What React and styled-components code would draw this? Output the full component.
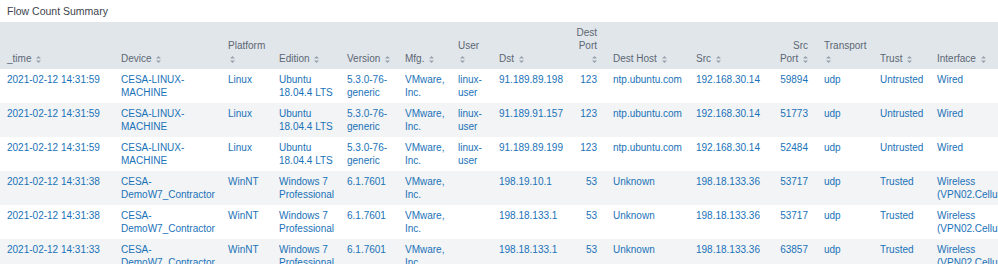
import React from 'react';
import styled, { createGlobalStyle } from 'styled-components';

const GlobalStyle = createGlobalStyle`
  body {
    margin: 0;
    background: #ffffff;
    font-family: "Liberation Sans", Arial, sans-serif;
  }
`;

// column widths measured off the dashboard panel
const COLUMNS = '114px 107px 51px 68px 58px 53px 41px 76px 38px 83px 82px 46px 56px 57px 130px';

const Panel = styled.div`
  width: 100vw;
  overflow: hidden;
`;

const Title = styled.div`
  height: 22px;
  padding-left: 7px;
  font-size: 10.5px;
  line-height: 22px;
  color: #3c444d;
`;

const Table = styled.div`
  width: 1060px;
`;

const HeadRow = styled.div`
  display: grid;
  grid-template-columns: ${COLUMNS};
  align-items: end;
  height: 47px;
  padding-bottom: 4px;
  box-sizing: border-box;
  background: #e1e6eb;
`;

const HeadCell = styled.div`
  padding: 0 ${p => (p.$right ? '9px' : '0')} 0 7px;
  font-size: 10px;
  line-height: 13px;
  color: #5c6773;
  white-space: pre;
  text-align: ${p => (p.$right ? 'right' : 'left')};
`;

const Row = styled.div`
  display: grid;
  grid-template-columns: ${COLUMNS};
  align-items: start;
  height: 34px;
  padding-top: 4px;
  box-sizing: border-box;
  background: ${p => (p.$striped ? '#f2f4f5' : '#ffffff')};
`;

const Cell = styled.div`
  padding: 0 ${p => (p.$right ? '9px' : '0')} 0 7px;
  font-size: 10px;
  line-height: 13px;
  color: #1a72b8;
  white-space: pre;
  text-align: ${p => (p.$right ? 'right' : 'left')};
`;

const Sort = styled.svg`
  display: inline-block;
  width: 5px;
  height: 7px;
  margin-left: 2px;
  vertical-align: -1px;
`;

const SortIcon = () => (
  <Sort viewBox="0 0 5 7">
    <path d="M2.5 0 L5 2.6 H0 Z M2.5 7 L0 4.4 H5 Z" fill="#9aa3ab" />
  </Sort>
);

const headers = [
  { label: '_time' },
  { label: 'Device' },
  { label: 'Platform', wrap: true },
  { label: 'Edition' },
  { label: 'Version' },
  { label: 'Mfg.' },
  { label: 'User', wrap: true },
  { label: 'Dst' },
  { label: 'Dest\nPort', wrap: true, right: true },
  { label: 'Dest Host' },
  { label: 'Src' },
  { label: 'Src\nPort', right: true },
  { label: 'Transport', wrap: true },
  { label: 'Trust' },
  { label: 'Interface' },
];

const RIGHT = [8, 11];

const linux = ['CESA-LINUX-\nMACHINE', 'Linux', 'Ubuntu\n18.04.4 LTS', '5.3.0-76-\ngeneric', 'VMware,\nInc.', 'linux-\nuser'];
const win = ['CESA-\nDemoW7_Contractor', 'WinNT', 'Windows 7\nProfessional', '6.1.7601', 'VMware,\nInc.', ''];

const rows = [
  ['2021-02-12 14:31:59', ...linux, '91.189.89.198', '123', 'ntp.ubuntu.com', '192.168.30.14', '59894', 'udp', 'Untrusted', 'Wired'],
  ['2021-02-12 14:31:59', ...linux, '91.189.91.157', '123', 'ntp.ubuntu.com', '192.168.30.14', '51773', 'udp', 'Untrusted', 'Wired'],
  ['2021-02-12 14:31:59', ...linux, '91.189.89.199', '123', 'ntp.ubuntu.com', '192.168.30.14', '52484', 'udp', 'Untrusted', 'Wired'],
  ['2021-02-12 14:31:38', ...win, '198.19.10.1', '53', 'Unknown', '198.18.133.36', '53717', 'udp', 'Trusted', 'Wireless\n(VPN02.Cellular)'],
  ['2021-02-12 14:31:38', ...win, '198.18.133.1', '53', 'Unknown', '198.18.133.36', '53717', 'udp', 'Trusted', 'Wireless\n(VPN02.Cellular)'],
  ['2021-02-12 14:31:33', ...win, '198.18.133.1', '53', 'Unknown', '198.18.133.36', '63857', 'udp', 'Trusted', 'Wireless\n(VPN02.Cellular)'],
];

export default function App() {
  return (
    <Panel>
      <GlobalStyle />
      <Title>Flow Count Summary</Title>
      <Table>
        <HeadRow>
          {headers.map(h => (
            <HeadCell key={h.label} $right={h.right}>
              {h.label}
              {h.wrap ? '\n' : ' '}
              <SortIcon />
            </HeadCell>
          ))}
        </HeadRow>
        {rows.map((row, i) => (
          <Row key={i} $striped={i % 2 === 1}>
            {row.map((value, j) => (
              <Cell key={j} $right={RIGHT.includes(j)}>{value}</Cell>
            ))}
          </Row>
        ))}
      </Table>
    </Panel>
  );
}
